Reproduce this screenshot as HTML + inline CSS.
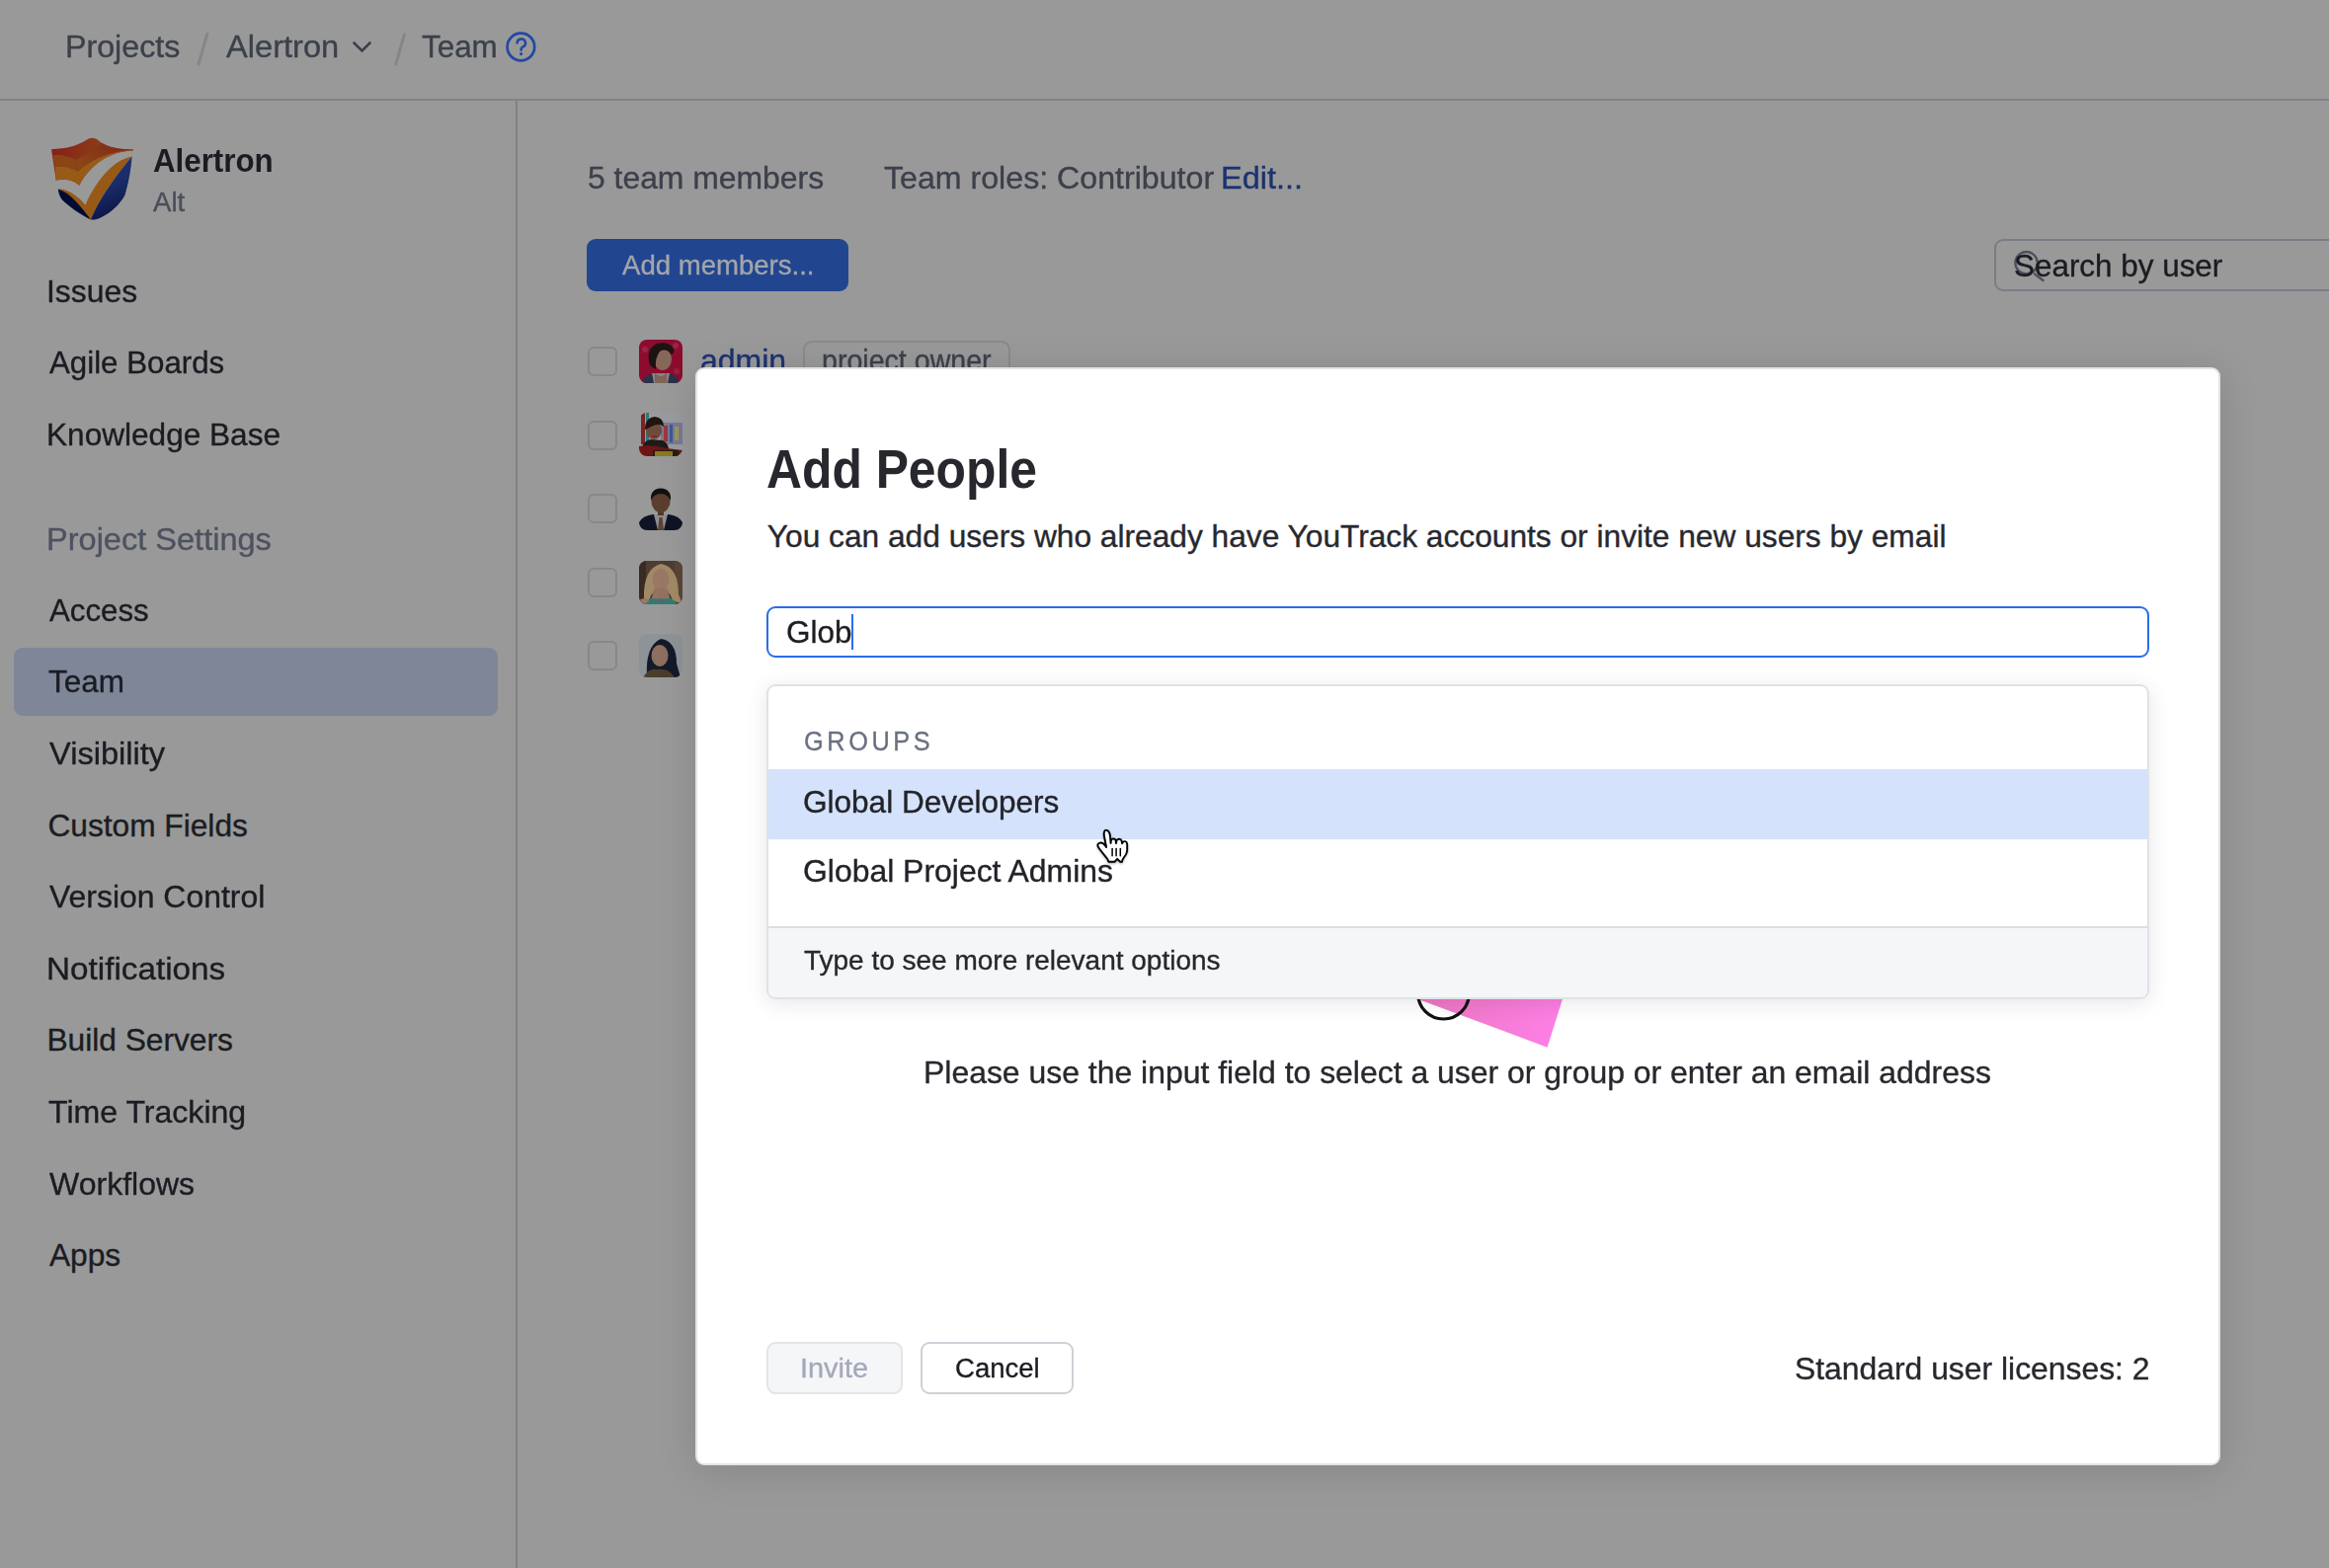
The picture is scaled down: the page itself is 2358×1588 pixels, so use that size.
<!DOCTYPE html>
<html><head><meta charset="utf-8"><style>
html,body{margin:0;padding:0;width:2358px;height:1588px;overflow:hidden;background:#999999;font-family:"Liberation Sans",sans-serif}
.t{position:absolute;white-space:nowrap;line-height:1;transform-origin:0 0;-webkit-text-stroke:0.35px currentColor}
.r{position:absolute}
#modal{position:absolute;left:704px;top:372px;width:1544px;height:1112px;box-sizing:border-box;border:2px solid #e3e4e8;border-radius:9px;background:#fff;box-shadow:0 6px 40px rgba(0,14,8,0.13)}
</style></head><body>
<div id="page">
<div class="r" style="left:0px;top:100px;width:2358px;height:2px;background:#828387"></div>
<div class="r" style="left:522px;top:102px;width:2px;height:1486px;background:#828387"></div>
<div class="t" style="left:66.36px;top:32.17px;font-size:31.69px;color:#3c404b;transform:scaleX(1.0162);">Projects</div>
<svg class="r" style="left:0;top:0" width="560" height="100"><g stroke-linecap="round" fill="none"><line x1="209.8" y1="34.5" x2="201" y2="65" stroke="#84868b" stroke-width="3"/><line x1="409.3" y1="35" x2="400.8" y2="65" stroke="#84868b" stroke-width="3"/><polyline points="358.5,43.5 366.5,51.5 374.5,43.5" stroke="#3c404b" stroke-width="2.6"/><circle cx="527.4" cy="47.5" r="13.8" stroke="#2149a2" stroke-width="2.7"/><path d="M523.6 43.6 a4.2 4.2 0 1 1 5.8 3.9 q-1.8 0.8 -1.8 2.6 v0.6" stroke="#2149a2" stroke-width="2.5"/><circle cx="527.6" cy="54.6" r="1.6" fill="#2149a2"/></g></svg>
<div class="t" style="left:228.54px;top:32.17px;font-size:31.69px;color:#3c404b;transform:scaleX(1.0292);">Alertron</div>
<div class="t" style="left:427.29px;top:32.17px;font-size:31.69px;color:#3c404b;transform:scaleX(0.9909);">Team</div>
<svg class="r" style="left:45px;top:135px" width="96" height="92" viewBox="0 0 1636 1568">
<defs>
<linearGradient id="lgA" x1="0" y1="0" x2="1" y2="0"><stop offset="0" stop-color="#86201a"/><stop offset="0.55" stop-color="#8a3a16"/><stop offset="1" stop-color="#80231a"/></linearGradient>
<linearGradient id="lgR" x1="0" y1="0.6" x2="1" y2="0"><stop offset="0" stop-color="#8b4515"/><stop offset="1" stop-color="#80231a"/></linearGradient>
<linearGradient id="lgB" x1="0" y1="0" x2="0.3" y2="1"><stop offset="0" stop-color="#1f3378"/><stop offset="0.55" stop-color="#1a2c6a"/><stop offset="1" stop-color="#0c1644"/></linearGradient>
</defs>
<path d="M120 275 C350 270 560 220 720 120 C790 70 870 65 950 140 C1080 240 1300 280 1535 280 L1530 300 C1150 310 800 520 600 900 C520 820 380 770 200 810 Z" fill="url(#lgA)"/>
<path d="M540 460 L1000 175 C1100 240 1300 280 1535 282 L1400 300 C1000 350 760 480 580 660 Z" fill="url(#lgR)"/>
<path d="M140 380 C300 360 450 400 540 460 L580 660 C480 600 350 560 180 580 Z" fill="#894515"/>
<path d="M180 580 C350 560 480 600 580 660 C800 450 1100 320 1535 285 L1530 300 C1150 310 800 520 600 900 C520 820 380 770 200 810 Z" fill="#985a17"/>
<path d="M235 965 C400 950 600 1100 705 1240 C900 800 1200 450 1510 400 C1300 650 950 1100 800 1490 C650 1380 450 1040 235 965 Z" fill="#985816"/>
<path d="M235 965 C460 1030 650 1300 800 1490 C600 1390 420 1260 300 1140 C260 1090 240 1020 235 965 Z" fill="#030b32"/>
<path d="M1510 400 C1300 650 950 1100 800 1490 C1000 1510 1300 1250 1390 1060 C1450 850 1490 650 1510 400 Z" fill="url(#lgB)"/>
</svg>
<div class="t" style="left:154.72px;top:147.09px;font-size:32.85px;color:#1b1c22;font-weight:bold;-webkit-text-stroke:0;transform:scaleX(0.9528);">Alertron</div>
<div class="t" style="left:155.45px;top:192.16px;font-size:26.74px;color:#4a4e5a;transform:scaleX(1.0335);">Alt</div>
<div class="t" style="left:47.06px;top:280.17px;font-size:31.69px;color:#1b1c22;transform:scaleX(1.0057);">Issues</div>
<div class="t" style="left:49.94px;top:351.97px;font-size:31.69px;color:#1b1c22;transform:scaleX(0.9863);">Agile Boards</div>
<div class="t" style="left:47.41px;top:425.17px;font-size:31.69px;color:#1b1c22;transform:scaleX(0.9966);">Knowledge Base</div>
<div class="t" style="left:47.33px;top:530.87px;font-size:31.69px;color:#4e5260;transform:scaleX(1.0268);">Project Settings</div>
<div class="r" style="left:14px;top:656px;width:490px;height:69px;background:#7f8698;border-radius:9px"></div>
<div class="t" style="left:49.94px;top:602.77px;font-size:31.69px;color:#1b1c22;transform:scaleX(0.9849);">Access</div>
<div class="t" style="left:49.29px;top:675.37px;font-size:31.69px;color:#1b1c22;transform:scaleX(0.9936);">Team</div>
<div class="t" style="left:49.86px;top:747.97px;font-size:31.69px;color:#1b1c22;transform:scaleX(1.0284);">Visibility</div>
<div class="t" style="left:48.39px;top:820.57px;font-size:31.69px;color:#1b1c22;">Custom Fields</div>
<div class="t" style="left:49.86px;top:893.17px;font-size:31.69px;color:#1b1c22;transform:scaleX(1.0076);">Version Control</div>
<div class="t" style="left:47.27px;top:965.77px;font-size:31.69px;color:#1b1c22;transform:scaleX(1.0501);">Notifications</div>
<div class="t" style="left:47.40px;top:1038.37px;font-size:31.69px;color:#1b1c22;">Build Servers</div>
<div class="t" style="left:49.28px;top:1110.97px;font-size:31.69px;color:#1b1c22;transform:scaleX(1.0122);">Time Tracking</div>
<div class="t" style="left:49.86px;top:1183.57px;font-size:31.69px;color:#1b1c22;transform:scaleX(1.0107);">Workflows</div>
<div class="t" style="left:49.94px;top:1256.17px;font-size:31.69px;color:#1b1c22;">Apps</div>
<div class="t" style="left:594.92px;top:165.07px;font-size:31.69px;color:#3c404b;transform:scaleX(1.0056);">5 team members</div>
<div class="t" style="left:895.08px;top:165.07px;font-size:31.69px;color:#3c404b;transform:scaleX(1.0145);">Team roles: Contributor</div>
<div class="t" style="left:1236.33px;top:165.07px;font-size:31.69px;color:#1c3270;transform:scaleX(1.0263);">Edit...</div>
<div class="r" style="left:594px;top:242px;width:265px;height:52.5px;background:#21468f;border-radius:9px"></div>
<div class="t" style="left:629.95px;top:253.93px;font-size:28.20px;color:#a3a5ab;transform:scaleX(0.9777);">Add members...</div>
<div class="r" style="left:2019px;top:242px;width:381px;height:53px;border:2px solid #7a7d84;border-radius:9px;box-sizing:border-box"></div>
<svg class="r" style="left:2030px;top:245px" width="50" height="50"><g fill="none" stroke="#4d515e" stroke-width="2.3" stroke-linecap="round"><circle cx="21.6" cy="21.2" r="11.2"/><line x1="29.8" y1="32.3" x2="38.5" y2="39"/></g></svg>
<div class="t" style="left:2038.57px;top:254.17px;font-size:31.69px;color:#1b1c22;transform:scaleX(0.9913);">Search by user</div>
<div class="r" style="left:595px;top:351px;width:30px;height:30px;border:2px solid #85878c;border-radius:6px;box-sizing:border-box"></div>
<div class="r" style="left:595px;top:425.5px;width:30px;height:30.0px;border:2px solid #85878c;border-radius:6px;box-sizing:border-box"></div>
<div class="r" style="left:595px;top:500px;width:30px;height:30px;border:2px solid #85878c;border-radius:6px;box-sizing:border-box"></div>
<div class="r" style="left:595px;top:574.5px;width:30px;height:30.0px;border:2px solid #85878c;border-radius:6px;box-sizing:border-box"></div>
<div class="r" style="left:595px;top:649px;width:30px;height:30px;border:2px solid #85878c;border-radius:6px;box-sizing:border-box"></div>
<svg class="r" style="left:647px;top:344px" width="44" height="44" viewBox="0 0 44 44"><defs><clipPath id="c344"><rect width="44" height="44" rx="8"/></clipPath></defs><g clip-path="url(#c344)"><rect width="44" height="44" fill="#8c0c2e"/><circle cx="6" cy="10" r="3" fill="#a04060" opacity=".5"/><circle cx="37" cy="6" r="3" fill="#a04060" opacity=".5"/><circle cx="38" cy="32" r="3" fill="#a04060" opacity=".4"/><path d="M3 44 Q5 36 14 34 L30 34 Q39 36 41 44 Z" fill="#2a3148"/><path d="M13 34 L31 34 L29 44 L15 44 Z" fill="#8a8480"/><path d="M16 34 Q22 40 28 34 L28 44 L16 44 Z" fill="#7d6558"/><ellipse cx="24" cy="20" rx="9" ry="11" fill="#86685a"/><path d="M10 22 Q8 8 18 4 Q30 1 35 9 Q36 14 33 15 Q27 8 21 12 Q16 18 17 30 Q11 28 10 22 Z" fill="#1c1412"/></g></svg>
<svg class="r" style="left:647px;top:418px" width="44" height="44" viewBox="0 0 44 44"><defs><clipPath id="c418"><rect width="44" height="44" rx="8"/></clipPath></defs><g clip-path="url(#c418)"><rect width="44" height="44" fill="#9a9aa0"/><rect x="2" y="0" width="4" height="32" fill="#7a2424"/><rect x="7" y="0" width="3" height="32" fill="#2a7a80"/><rect x="22" y="10" width="22" height="22" fill="#7a7898"/><rect x="25" y="13" width="4" height="16" fill="#9a3a3a"/><rect x="31" y="12" width="3" height="18" fill="#3a5a9a"/><rect x="36" y="14" width="4" height="14" fill="#9a9a4a"/><path d="M2 38 Q4 28 12 27 L24 28 Q30 31 30 38 Z" fill="#1e1a1a"/><ellipse cx="15" cy="18" rx="8" ry="9" fill="#6e4c3c"/><path d="M6 17 Q6 5 16 4 Q25 5 25 14 Q19 9 9 16 Z" fill="#20160f"/><path d="M13 24 L18 24" stroke="#8a1c1c" stroke-width="1.5"/><path d="M0 34 Q14 32 28 36 L44 38 L44 44 L0 44 Z" fill="#6e1414"/><rect x="14" y="38" width="26" height="6" fill="#241e10"/><rect x="16" y="39" width="18" height="5" fill="#8a7a20"/></g></svg>
<svg class="r" style="left:647px;top:493px" width="44" height="44" viewBox="0 0 44 44"><defs><clipPath id="c493"><rect width="44" height="44" rx="8"/></clipPath></defs><g clip-path="url(#c493)"><rect width="44" height="44" fill="#999"/><path d="M0 44 L0 36 Q4 29 14 28 L30 28 Q40 29 44 36 L44 44 Z" fill="#0e1424"/><path d="M15 28 L29 28 L25 44 L19 44 Z" fill="#8e8e90"/><path d="M20.5 31 L23.5 31 L25 44 L19 44 Z" fill="#5e4232"/><rect x="19" y="22" width="6" height="7" fill="#56392a"/><ellipse cx="22" cy="15" rx="9.5" ry="11" fill="#5a3e2e"/><path d="M12 14 Q11 2 22 1.5 Q33 2 32 14 Q29 7 22 7 Q15 7 12 14 Z" fill="#121010"/></g></svg>
<svg class="r" style="left:647px;top:567.5px" width="44" height="44" viewBox="0 0 44 44"><defs><clipPath id="c567"><rect width="44" height="44" rx="8"/></clipPath></defs><g clip-path="url(#c567)"><rect width="44" height="44" fill="#4e3c34"/><rect x="0" y="0" width="7" height="44" fill="#3a2a24"/><rect x="36" y="0" width="8" height="44" fill="#5a4438"/><path d="M5 38 Q4 8 22 3 Q40 6 40 34 L44 44 L34 40 Q30 28 22 28 Q14 28 10 40 Z" fill="#a08a66"/><ellipse cx="22" cy="19" rx="8.5" ry="11" fill="#9a7866"/><path d="M6 44 Q10 36 22 36 Q34 36 38 44 Z" fill="#2a8070"/><path d="M15 37 Q22 42 29 37" stroke="#6a5a7a" stroke-width="2" fill="none"/><path d="M0 40 Q6 36 10 40 L10 44 L0 44 Z" fill="#9a7866"/><path d="M15 28 L29 28 L31 38 Q22 41 13 38 Z" fill="#94725f"/><path d="M6 44 Q10 38 22 38 Q34 38 38 44 Z" fill="#2a8070"/><path d="M15 39 Q22 43 29 39" stroke="#6a5a7a" stroke-width="2" fill="none"/></g></svg>
<svg class="r" style="left:647px;top:642px" width="44" height="44" viewBox="0 0 44 44"><defs><clipPath id="c642"><rect width="44" height="44" rx="8"/></clipPath></defs><g clip-path="url(#c642)"><rect width="44" height="44" fill="#8e9398"/><path d="M8 44 Q6 12 22 5 Q38 7 38 30 L42 44 Z" fill="#141a2a"/><ellipse cx="21" cy="22" rx="8.5" ry="11" fill="#8e6e5e"/><path d="M4 44 Q10 34 18 36 Q30 34 36 44 Z" fill="#4a3e2a"/></g></svg>
<div class="t" style="left:709.24px;top:350.17px;font-size:31.69px;color:#1c3270;transform:scaleX(1.0086);">admin</div>
<div class="r" style="left:813px;top:344.5px;width:210px;height:55.5px;border:2px solid #898a8e;border-radius:9px;box-sizing:border-box"></div>
<div class="t" style="left:832.06px;top:350.17px;font-size:31.69px;color:#3c404b;transform:scaleX(0.9023);">project owner</div>
</div>
<div id="modal"></div>
<div class="t" style="left:775.96px;top:447.60px;font-size:54.80px;color:#27282e;font-weight:bold;-webkit-text-stroke:0;transform:scaleX(0.9089);">Add People</div>
<div class="t" style="left:776.80px;top:527.97px;font-size:31.69px;color:#27282e;">You can add users who already have YouTrack accounts or invite new users by email</div>
<div class="r" style="left:776px;top:614px;width:1400px;height:52px;border:2px solid #2a6deb;border-radius:9px;box-sizing:border-box;background:#fff"></div>
<div class="t" style="left:796.22px;top:625.17px;font-size:31.69px;color:#1d1e24;transform:scaleX(0.9921);">Glob</div>
<div class="r" style="left:862px;top:622px;width:2px;height:36px;background:#2a6deb"></div>
<svg class="r" style="left:1300px;top:900px" width="320" height="180"><defs><linearGradient id="pk" gradientUnits="userSpaceOnUse" x1="140" y1="100" x2="290" y2="160"><stop offset="0" stop-color="#ec76c0"/><stop offset="1" stop-color="#ff80ea"/></linearGradient></defs><polygon points="50,80 292,80 266.6,160.7" fill="url(#pk)"/><circle cx="161.5" cy="106" r="26" fill="none" stroke="#111" stroke-width="3.2"/></svg>
<div class="r" style="left:776px;top:693px;width:1400px;height:319px;box-sizing:border-box;border:2px solid #e1e2e6;border-radius:9px;background:#fff;box-shadow:0 4px 22px rgba(0,0,0,0.10);overflow:hidden"><div class="r" style="left:0;top:84px;width:1396px;height:71px;background:#d4e2fc"></div><div class="r" style="left:0;top:243px;width:1396px;height:73px;background:#f5f6f8;border-top:2px solid #dcdee2"></div></div>
<div class="t" style="left:813.53px;top:736.33px;font-size:28.20px;color:#6a7080;letter-spacing:4.0px;transform:scaleX(0.8975);">GROUPS</div>
<div class="t" style="left:813.21px;top:797.07px;font-size:31.69px;color:#222329;transform:scaleX(0.9949);">Global Developers</div>
<div class="t" style="left:813.19px;top:867.07px;font-size:31.69px;color:#222329;transform:scaleX(1.0072);">Global Project Admins</div>
<div class="t" style="left:814.07px;top:958.33px;font-size:28.20px;color:#27282e;transform:scaleX(0.9927);">Type to see more relevant options</div>
<div class="t" style="left:935.38px;top:1071.17px;font-size:31.69px;color:#27282e;transform:scaleX(1.0076);">Please use the input field to select a user or group or enter an email address</div>
<div class="r" style="left:776px;top:1359px;width:138px;height:53px;border:2px solid #e3e4e8;border-radius:9px;box-sizing:border-box;background:#f5f6f8"></div>
<div class="t" style="left:810.13px;top:1371.33px;font-size:28.20px;color:#a4a9ba;transform:scaleX(1.0262);">Invite</div>
<div class="r" style="left:932px;top:1359px;width:155px;height:53px;border:2px solid #cfd1d8;border-radius:9px;box-sizing:border-box;background:#fff"></div>
<div class="t" style="left:966.60px;top:1371.33px;font-size:28.20px;color:#1b1c22;transform:scaleX(0.9769);">Cancel</div>
<div class="t" style="left:1816.55px;top:1370.57px;font-size:31.69px;color:#27282e;transform:scaleX(1.0054);">Standard user licenses: 2</div>
<svg class="r" style="left:1100px;top:830px" width="60" height="50" viewBox="0 0 60 50"><g filter="url(#cs)"><path d="M19.8 10.8 C22.5 10.8 23.6 14 24 17 L24.6 24 L24.8 21.5 C25.2 19.2 28.8 18.6 29.6 21.2 L30 24 L30.4 21.8 C31 19.2 35 19 35.6 21.6 L36 24.2 L36.6 23.4 C37.6 21.4 41 21.6 41.2 25 L41.2 31.5 C41 34.5 39.5 36.5 37.8 38.5 C36.8 39.8 36 41 36 42.7 L34 42.7 L31.2 39.8 L28.7 42.7 L22.4 42.7 C22 41 21.6 40 20.2 38.6 L13 29.5 C11 27 10.6 24.6 13 23.8 C15.5 23 18.5 25.4 20.1 28 L18 17 C17.4 13.6 17.8 10.8 19.8 10.8 Z" fill="#fff" stroke="#000" stroke-width="1.9" stroke-linejoin="round"/><g stroke="#000" stroke-width="1.5" stroke-linecap="round"><line x1="26.1" y1="29.5" x2="26.1" y2="36.8"/><line x1="30.1" y1="29.5" x2="30.1" y2="36.8"/><line x1="34.3" y1="29.5" x2="34.3" y2="36.8"/></g></g><defs><filter id="cs" x="-30%" y="-30%" width="160%" height="160%"><feDropShadow dx="0" dy="1" stdDeviation="1" flood-opacity="0.35"/></filter></defs></svg>
</body></html>
